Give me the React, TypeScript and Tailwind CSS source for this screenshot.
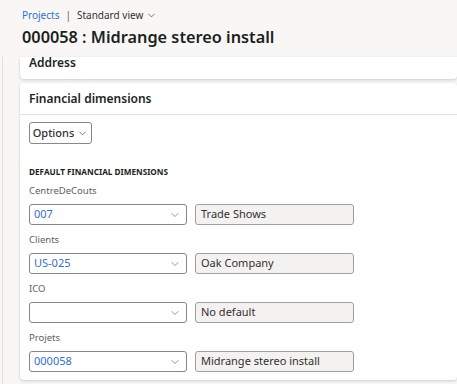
import React from "react";
import { ChevronDown } from "lucide-react";

type Dim = { label: string; value: string; desc: string };

const dims: Dim[] = [
    { label: "CentreDeCouts", value: "007", desc: "Trade Shows" },
    { label: "Clients", value: "US-025", desc: "Oak Company" },
    { label: "ICO", value: "", desc: "No default" },
    { label: "Projets", value: "000058", desc: "Midrange stereo install" },
];

function DimRow({ dim }: { dim: Dim }) {
    return (
        <div className="flex flex-col">
            <div className="h-[15px] text-[9.5px] leading-[15px] text-[#605e5c]">{dim.label}</div>
            <div className="mt-[6px] flex gap-[8px]">
                <div className="flex h-[21px] w-[158px] items-center justify-between rounded-[3px] border border-[#8a8886] bg-white pl-[4px] pr-[5px]">
                    <span className="text-[11px] text-[#2f6fd6]">{dim.value}</span>
                    <ChevronDown size={12} strokeWidth={1.3} className="text-[#605e5c]" />
                </div>
                <div className="flex h-[21px] w-[159px] items-center rounded-[3px] border border-[#a19f9d] bg-[#f3f2f1] px-[5px] text-[11px] text-[#323130]">
                    {dim.desc}
                </div>
            </div>
        </div>
    );
}

export default function App() {
    return (
        <div
            className="flex h-[384px] w-[457px] flex-col overflow-hidden bg-[#f8f7f6] text-[#201f1e]"
            style={{ fontFamily: '"Noto Sans", "Open Sans", sans-serif' }}
        >
            {/* page header */}
            <div className="flex h-[57px] flex-col pl-[22px] pt-[6px]">
                <div className="flex items-center gap-[6px] text-[10px] leading-[18px]">
                    <span className="text-[#2f6fd6]">Projects</span>
                    <span className="text-[#605e5c]">|</span>
                    <span className="flex items-center gap-[3px] text-[#323130]">
                        Standard view
                        <ChevronDown size={11} strokeWidth={1.4} />
                    </span>
                </div>
                <h1 className="mt-[1px] text-[16.3px] font-semibold leading-[24px] text-[#201f1e]">
                    000058 : Midrange stereo install
                </h1>
            </div>

            {/* scroll area */}
            <div className="ml-[2px] flex flex-1 flex-col gap-[4px] border-l border-[#e1dfdd] pl-[17px]">
                <div className="flex h-[22px] items-start rounded-b-[4px] bg-white pl-[9px] text-[12px] font-semibold leading-[12px] shadow-[0_1px_3px_rgba(0,0,0,0.18)]">
                    Address
                </div>

                <div className="flex h-[297px] flex-col rounded-[4px] bg-white shadow-[0_1px_3px_rgba(0,0,0,0.18)]">
                    <div className="flex h-[32px] items-center border-b border-[#e1dfdd] pl-[9px] text-[12px] font-semibold">
                        Financial dimensions
                    </div>
                    <div className="flex flex-col pl-[9px] pt-[7px]">
                        <button className="flex h-[22px] w-[63px] items-center justify-center gap-[3px] rounded-[3px] border border-[#8a8886] bg-white text-[11px] font-medium text-[#323130]">
                            Options
                            <ChevronDown size={11} strokeWidth={1.4} />
                        </button>
                        <div className="mt-[22px] text-[8.2px] font-bold leading-[12px] text-[#201f1e]">
                            DEFAULT FINANCIAL DIMENSIONS
                        </div>
                        <div className="mt-[5px] flex flex-col gap-[7px]">
                            {dims.map((d) => (
                                <DimRow key={d.label} dim={d} />
                            ))}
                        </div>
                    </div>
                </div>
            </div>
        </div>
    );
}
